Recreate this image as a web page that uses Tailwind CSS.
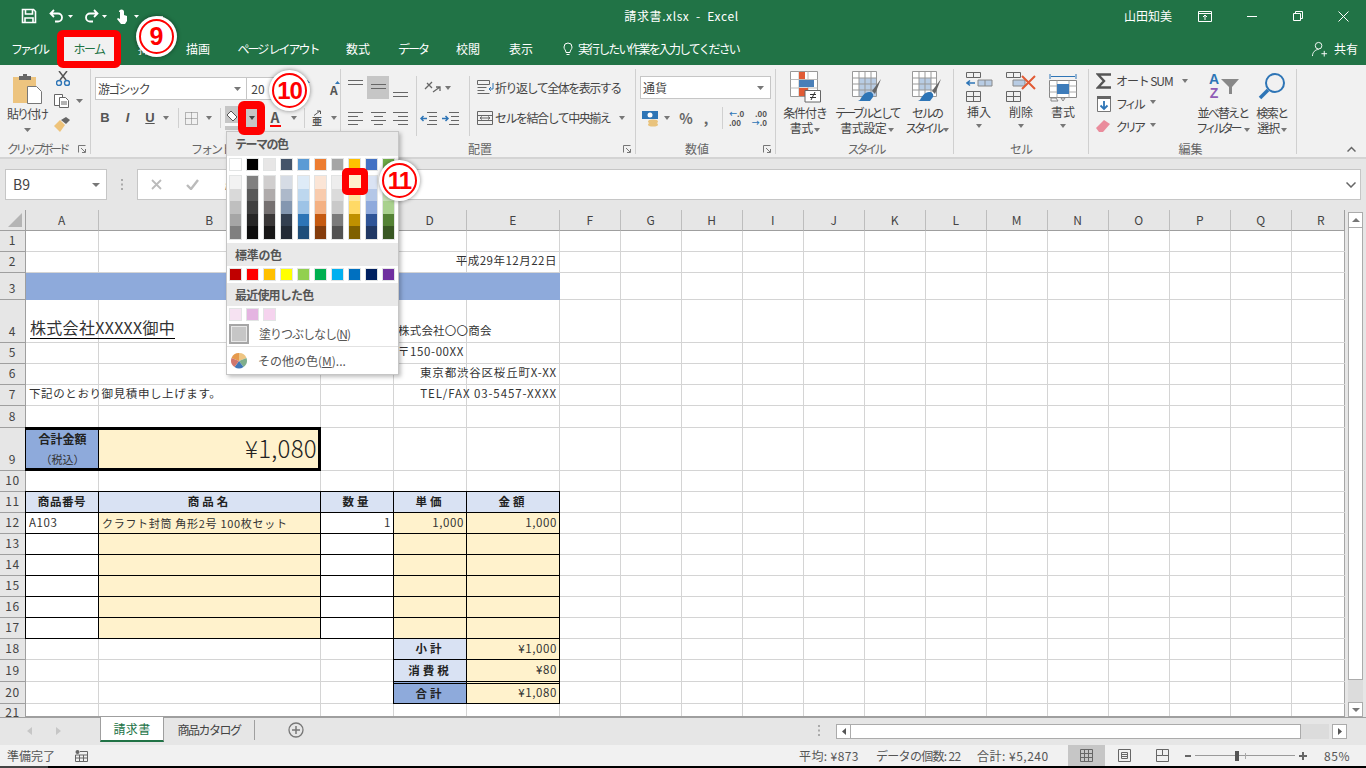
<!DOCTYPE html>
<html lang="ja"><head><meta charset="utf-8"><script src="https://cdn.jsdelivr.net/npm/@tailwindcss/browser@4"></script><title>請求書.xlsx - Excel</title></head>
<body class="m-0">
<div class="relative w-[1366px] h-[768px] overflow-hidden flex flex-col bg-[#e6e6e6] text-[#444] text-[12px] [font-family:'Noto_Sans_CJK_JP','Noto_Sans',sans-serif]">

<!-- title bar -->
<div class="h-[32px] shrink-0 bg-[#217346] text-white flex items-center">
  <div class="w-[21px]"></div>
  <svg class="w-[16px] h-[16px]" viewBox="0 0 16 16" fill="none" stroke="#fff" stroke-width="1.6"><path d="M1.5 1.5h11l2 2v11h-13z"/><path d="M4.5 2v4h7V2M4 15v-5h8v5" /></svg>
  <div class="w-[12px]"></div>
  <svg class="w-[16px] h-[14px]" viewBox="0 0 16 14" fill="none" stroke="#fff" stroke-width="1.8"><path d="M5 1 1.5 4.5 5 8M2 4.5h7a4 4 0 0 1 0 8H6"/></svg>
  <div class="w-[8px] flex justify-end"><svg width="5" height="3"><path d="M0 0h5L2.500 3z" fill="#fff"/></svg></div>
  <div class="w-[10px]"></div>
  <svg class="w-[16px] h-[14px]" viewBox="0 0 16 14" fill="none" stroke="#fff" stroke-width="1.800"><path d="M11 1l3.500 3.500L11 8M14 4.500H7a4 4 0 0 0 0 8h3"/></svg>
  <div class="w-[8px] flex justify-end"><svg width="5" height="3"><path d="M0 0h5L2.500 3z" fill="#fff"/></svg></div>
  <div class="w-[8px]"></div>
  <svg class="w-[13px] h-[17px]" viewBox="0 0 13 17" fill="#fff"><path d="M4 4a2.500 2.500 0 0 1 5 0v3l3 1v5l-2 3H6L2 11l1-1 2 1V4z"/></svg>
  <div class="w-[11px] flex justify-end"><svg width="5" height="3"><path d="M0 0h5L2.500 3z" fill="#fff"/></svg></div>
  <div class="w-[18px]"></div>
  <div class="w-[6px] h-[1px] bg-white"></div>
  <div class="flex-1 text-center text-[12px] pl-[76px]"><span class="tracking-[0.6px]">請求書.xlsx&nbsp; -&nbsp; Excel</span></div>
  <div class="w-[48px] text-[12px] tracking-[0px] mr-[26px] whitespace-nowrap">山田知美</div>
  <svg class="w-[14px] h-[11px]" viewBox="0 0 14 11" fill="none" stroke="#fff"><path d="M.5 .5h13v10H.5zM.5 2.500h13M7 9V4M5 6l2-2 2 2"/></svg>
  <div class="w-[35px]"></div>
  <div class="w-[10px] h-px bg-white"></div>
  <div class="w-[36px]"></div>
  <svg class="w-[10px] h-[10px]" viewBox="0 0 10 10" fill="none" stroke="#fff"><path d="M.5 2.500h7v7h-7zM2.500 2.500v-2h7v7h-2"/></svg>
  <div class="w-[35px]"></div>
  <svg class="w-[11px] h-[11px]" viewBox="0 0 11 11" fill="none" stroke="#fff"><path d="M.5 .5l10 10M10.500 .5l-10 10"/></svg>
  <div class="w-[17px]"></div>
</div>

<!-- tabs -->
<div class="h-[33px] shrink-0 bg-[#217346] text-white flex items-center text-[12px]">
  <div class="w-[58px] text-center tracking-[-3px]">ファイル</div>
  <div class="w-[62px] text-center"></div>
  <div class="w-[60px] text-center">挿入</div>
  <div class="w-[36px] text-center">描画</div>
  <div class="w-[124px] text-center tracking-[-2px] whitespace-nowrap">ページ&nbsp; レイアウト</div>
  <div class="w-[36px] text-center">数式</div>
  <div class="w-[74px] text-center tracking-[-2px]">データ</div>
  <div class="w-[36px] text-center">校閲</div>
  <div class="w-[70px] text-center">表示</div>
  <svg class="w-[10px] h-[14px] ml-[7px] mr-[5px]" viewBox="0 0 10 14" fill="none" stroke="#fff"><path d="M3 10.500C3 8 1 7.500 1 5a4 4 0 0 1 8 0c0 2.500-2 3-2 5.500zM3.500 12.500h3"/></svg>
  <div class="w-[170px] whitespace-nowrap tracking-[-1.9px]">実行したい作業を入力してください</div>
  <div class="flex-1"></div>
  <svg class="w-[16px] h-[16px] mr-[6px]" viewBox="0 0 17 16" fill="none" stroke="#fff"><circle cx="7" cy="4.500" r="3.500"/><path d="M.5 15.500c0-4 3-7 6.500-7M10 13h6M13 10v6"/></svg>
  <div class="mr-[8px] tracking-[0px] whitespace-nowrap">共有</div>
</div>

<!-- ribbon -->
<div class="h-[94px] shrink-0 bg-[#f1f1f1] border-b-2 border-[#d4d4d4] flex text-[#444] text-[12px] tracking-[-1.1px]">

  <!-- clipboard -->
  <div class="w-[90px] h-[92px] flex flex-col shrink-0">
    <div class="h-[75px] flex">
      <div class="w-[54px] flex flex-col items-center pt-[9px]">
        <svg class="w-[30px] h-[30px]" viewBox="0 0 30 30"><path d="M1 3h23v26H1z" fill="#edc47f"/><path d="M7 4V2h4V0h4v2h4v4H7z" fill="#666"/><path d="M15.500 12.500h9l5 5v12h-14z" fill="#fff" stroke="#777"/></svg>
        <div class="mt-[2px] leading-[16px] whitespace-nowrap tracking-[-2px]">貼り付け</div>
        <svg class="mt-[6px]" width="7" height="4"><path d="M0 0h7L3.500 4z" fill="#777"/></svg>
      </div>
      <div class="w-[36px] flex flex-col pt-[6px]">
        <svg class="w-[14px] h-[15px] ml-[2px]" viewBox="0 0 14 15" fill="none"><path d="M3 0l7 9M11 0 4 9" stroke="#555" stroke-width="1.500"/><circle cx="3" cy="12" r="2.500" stroke="#2e75b6" stroke-width="1.400"/><circle cx="11" cy="12" r="2.500" stroke="#2e75b6" stroke-width="1.400"/></svg>
        <div class="flex items-center mt-[8px] ml-[0px]">
          <svg class="w-[16px] h-[14px]" viewBox="0 0 16 14" fill="#fff" stroke="#666"><path d="M.5 .5h8v11h-8z"/><path d="M5.500 3.500h6l3 3v7h-9z"/><path d="M7 8h6M7 10h6"/></svg>
          <svg class="ml-[6px]" width="7" height="4"><path d="M0 0h7L3.500 4z" fill="#777"/></svg>
        </div>
        <svg class="w-[16px] h-[15px] mt-[9px]" viewBox="0 0 16 15"><path d="M0 9l6-6 5 5-5 7z" fill="#eec37a"/><path d="M7 3l5-3 4 3-4 4z" fill="#666"/></svg>
      </div>
    </div>
    <div class="h-[17px] flex items-center pl-[7px] text-[#666] justify-between pr-[4px] whitespace-nowrap"><span class="tracking-[-3.4px]">クリップボード</span><svg width="8" height="8" fill="none" stroke="#777"><path d="M.5 .5h7M.5 .5v7M3 3l4 4M7.500 4v3.500H4"/></svg></div>
  </div>
  <div class="w-px h-[85px] mt-[4px] bg-[#d0d0d0] shrink-0"></div>

  <!-- font -->
  <div class="w-[249px] h-[92px] shrink-0 flex flex-col">
    <div class="h-[75px] flex flex-col pt-[12px]">
      <div class="flex h-[23px] pl-[4px]">
        <div class="w-[156px] h-[23px] bg-white border border-[#c6c6c6] flex items-center justify-between px-[2px] pr-[5px]"><span class="tracking-[-1.8px]">游ゴシック</span><svg width="7" height="4"><path d="M0 0h7L3.500 4z" fill="#777"/></svg></div>
        <div class="w-[54px] h-[23px] bg-white border border-[#c6c6c6] border-l-0 flex items-center pl-[4px] tracking-[0px]">20</div>
        <div class="w-[8px] relative"><svg class="absolute right-[-2px] top-[3px]" width="5" height="3"><path d="M0 3h5L2.500 0z" fill="#2e75b6"/></svg></div>
        <div class="w-[19px]"></div>
        <div class="relative w-[14px] text-center text-[12px] font-bold text-[#555] leading-[26px]">A<svg class="absolute right-0 top-[4px]" width="5" height="3"><path d="M0 3h5L2.500 0z" fill="#2e75b6"/></svg></div>
      </div>
      <div class="flex h-[24px] mt-[6px] items-center">
        <div class="w-[3px]"></div>
        <div class="w-[22px] text-center font-bold text-[13px] text-[#555] tracking-normal [font-family:'Liberation_Sans']">B</div>
        <div class="w-[23px] text-center font-bold italic text-[13px] text-[#555] tracking-normal [font-family:'Liberation_Sans']">I</div>
        <div class="w-[22px] text-center font-bold underline text-[13px] text-[#555] tracking-normal [font-family:'Liberation_Sans']">U</div>
        <div class="w-[10px] flex justify-center"><svg width="6" height="4"><path d="M0 0h6L3 4z" fill="#777"/></svg></div>
        <div class="w-[7px]"></div><div class="w-px h-[20px] bg-[#d0d0d0]"></div>
        <div class="w-[24px] flex justify-center"><svg width="13" height="13" fill="none" stroke="#777" stroke-dasharray="1 1"><path d="M.5 .5h12v12H.5zM6.500 .5v12M.5 6.500h12"/></svg></div>
        <div class="w-[12px] flex justify-center"><svg width="6" height="4"><path d="M0 0h6L3 4z" fill="#777"/></svg></div>
        <div class="w-[5px]"></div><div class="w-px h-[20px] bg-[#d0d0d0]"></div>
        <div class="w-[4px]"></div>
        <div class="w-[13px] h-[24px] bg-[#c6c6c6] flex flex-col items-center justify-center"><svg width="12" height="13" viewBox="0 0 12 13" fill="#fff" stroke="#555"><path d="M5 1l6 6-4 4-6-6z"/></svg><div class="w-[13px] h-[3px] bg-[#f8f8f8]"></div></div>
        <div class="w-[30px]"></div>
        <div class="w-[14px] flex flex-col items-center font-bold text-[14px] text-[#555] leading-[15px] tracking-normal">A<div class="w-[11px] h-[2px] bg-[#f00]"></div></div>
        <div class="w-[18px] flex justify-end pr-[3px]"><svg width="6" height="4"><path d="M0 0h6L3 4z" fill="#777"/></svg></div>
        <div class="w-[4px]"></div><div class="w-px h-[20px] bg-[#d0d0d0]"></div>
        <div class="w-[24px] flex flex-col items-center text-[10px] leading-[10px] font-bold text-[#555] tracking-normal"><svg width="9" height="6" fill="none" stroke="#555"><path d="M1 5.500 7 1M4 1h3.500v3"/></svg>亜</div>
        <div class="w-[10px] flex justify-center"><svg width="6" height="4"><path d="M0 0h6L3 4z" fill="#777"/></svg></div>
      </div>
    </div>
    <div class="h-[17px] flex items-center pl-[100px] text-[#666] whitespace-nowrap tracking-[-2px]">フォント</div>
  </div>
  <div class="w-px h-[85px] mt-[4px] bg-[#d0d0d0] shrink-0"></div>

  <!-- alignment -->
  <div class="w-[294px] h-[92px] shrink-0 flex flex-col">
    <div class="h-[75px] flex">
      <div class="flex flex-col pt-[11px] pl-[3px] w-[75px]">
        <div class="flex h-[23px] items-center">
          <div class="w-[23px] flex justify-center self-start pt-[4px]"><svg width="15" height="8" stroke="#666"><path d="M0 .5h15M0 4.500h15"/></svg></div>
          <div class="w-[22px] h-[23px] bg-[#c6c6c6] flex justify-center items-center"><svg width="15" height="8" stroke="#666"><path d="M0 .5h15M0 4.500h15"/></svg></div>
          <div class="w-[22px] flex justify-center self-end pb-[1px]"><svg width="15" height="8" stroke="#666"><path d="M0 2.500h15M0 6.500h15"/></svg></div>
        </div>
        <div class="flex h-[24px] mt-[7px] items-center">
          <div class="w-[23px] flex justify-center"><svg width="15" height="13" stroke="#666"><path d="M0 .5h15M0 4.500h10M0 8.500h15M0 12.500h10"/></svg></div>
          <div class="w-[22px] flex justify-center"><svg width="15" height="13" stroke="#666"><path d="M0 .5h15M3 4.500h9M0 8.500h15M3 12.500h9"/></svg></div>
          <div class="w-[22px] flex justify-center"><svg width="15" height="13" stroke="#666"><path d="M0 .5h15M5 4.500h10M0 8.500h15M5 12.500h10"/></svg></div>
        </div>
      </div>
      <div class="w-px h-[60px] mt-[11px] bg-[#d0d0d0]"></div>
      <div class="flex flex-col pt-[11px] w-[52px]">
        <div class="flex h-[23px] items-center pl-[7px]"><svg width="17" height="15" viewBox="0 0 17 15" fill="none" stroke="#666" stroke-width="1.300"><path d="M1 9l7-7M3 3l5 5M9 12l7-5M12 7h4v4" /></svg><svg class="ml-[4px]" width="6" height="4"><path d="M0 0h6L3 4z" fill="#777"/></svg></div>
        <div class="flex h-[24px] mt-[7px] items-center pl-[3px] gap-[5px]">
          <svg width="17" height="13" fill="none" stroke="#666"><path d="M7 .5h10M9 4.500h8M9 8.500h8M7 12.500h10"/><path d="M7 6.500H1M3.500 4l-2.500 2.500L3.500 9" stroke="#2e75b6" stroke-width="1.500"/></svg>
          <svg width="17" height="13" fill="none" stroke="#666"><path d="M7 .5h10M9 4.500h8M9 8.500h8M7 12.500h10"/><path d="M0 6.500h6M3.500 4l2.500 2.500L3.500 9" stroke="#2e75b6" stroke-width="1.500"/></svg>
        </div>
      </div>
      <div class="w-px h-[60px] mt-[11px] bg-[#d0d0d0]"></div>
      <div class="flex flex-col pt-[11px] pl-[7px]">
        <div class="flex h-[23px] items-center whitespace-nowrap"><svg class="mr-[1px]" width="17" height="15" fill="none" stroke="#666"><path d="M.5 .5h12v4H.5zM.5 7.500h9M.5 10.500h7M.5 13.500h12"/><path d="M16 3v6h-4l2-2M12 9l2 2" stroke="#2e75b6"/></svg><span class="tracking-[-1.5px]">折り返して全体を表示する</span></div>
        <div class="flex h-[24px] mt-[7px] items-center whitespace-nowrap"><svg class="mr-[2px]" width="16" height="14" fill="none" stroke="#666"><path d="M.5 .5h15v13H.5zM.5 4.500h15M.5 9.500h15M3 7h10M5 5.500 3 7l2 1.500M11 5.500 13 7l-2 1.500"/></svg><span class="tracking-[-1.5px]">セルを結合して中央揃え</span><svg class="ml-[9px]" width="6" height="4"><path d="M0 0h6L3 4z" fill="#777"/></svg></div>
      </div>
    </div>
    <div class="h-[17px] flex items-center justify-between text-[#666] pl-[127px] pr-[4px]"><span class="tracking-normal">配置</span><svg width="8" height="8" fill="none" stroke="#777"><path d="M.5 .5h7M.5 .5v7M3 3l4 4M7.500 4v3.500H4"/></svg></div>
  </div>
  <div class="w-px h-[85px] mt-[4px] bg-[#d0d0d0] shrink-0"></div>

  <!-- number -->
  <div class="w-[139px] h-[92px] shrink-0 flex flex-col">
    <div class="h-[75px] flex flex-col pt-[11px] pl-[4px]">
      <div class="w-[131px] h-[23px] bg-white border border-[#c6c6c6] flex items-center justify-between px-[2px] pr-[6px]"><span class="tracking-normal">通貨</span><svg width="7" height="4"><path d="M0 0h7L3.500 4z" fill="#777"/></svg></div>
      <div class="flex items-center h-[24px] mt-[7px] tracking-normal">
        <svg class="ml-[2px]" width="17" height="17" viewBox="0 0 17 17"><path d="M0 1h16v8H0z" fill="#2e75b6"/><circle cx="8" cy="5" r="2.500" fill="#fff"/><ellipse cx="11" cy="11.500" rx="5" ry="2" fill="#e9c37d"/><ellipse cx="11" cy="14.500" rx="5" ry="2" fill="#e9c37d"/></svg>
        <svg class="ml-[5px]" width="6" height="4"><path d="M0 0h6L3 4z" fill="#777"/></svg>
        <span class="w-[26px] ml-[3px] text-center text-[14px] font-bold text-[#666]">%</span>
        <span class="w-[14px] text-center text-[14px] font-bold text-[#666]">,</span>
        <div class="w-px h-[22px] ml-[9px] bg-[#d0d0d0]"></div>
        <div class="w-[24px] pl-[6px] text-[8px] leading-[9px] font-semibold text-[#555] whitespace-nowrap"><span class="text-[#2e75b6]">←</span>.0<br>.00</div>
        <div class="w-[20px] text-[8px] leading-[9px] text-right font-semibold text-[#555] whitespace-nowrap">.00<br><span class="text-[#2e75b6]">→</span>.0</div>
      </div>
    </div>
    <div class="h-[17px] flex items-center justify-between text-[#666] pl-[49px] pr-[4px]"><span class="tracking-normal">数値</span><svg width="8" height="8" fill="none" stroke="#777"><path d="M.5 .5h7M.5 .5v7M3 3l4 4M7.500 4v3.500H4"/></svg></div>
  </div>
  <div class="w-px h-[85px] mt-[4px] bg-[#d0d0d0] shrink-0"></div>

  <!-- styles -->
  <div class="w-[177px] h-[92px] shrink-0 flex flex-col">
    <div class="h-[75px] flex pl-[1px]">
      <div class="w-[56px] flex flex-col items-center pt-[6px]">
        <svg width="31" height="32" viewBox="0 0 31 32" fill="none"><path d="M.5 .5h27v25H.5z" fill="#fff" stroke="#999"/><path d="M9 .5v25M18 .5v25M.5 8.500h27M.5 17h27" stroke="#bbb"/><path d="M9 1h6v7H9z" fill="#e15b35"/><path d="M9 9h15v7H9z" fill="#4a7fb8"/><path d="M9 17h9v8H9z" fill="#e15b35"/><path d="M15 19.500h15.500V31H15z" fill="#fff" stroke="#666"/><path d="M20 23.500h6M20 26.500h6M25 21l-4 8" stroke="#333"/></svg>
        <div class="leading-[15px] mt-[2px] text-center whitespace-nowrap">条件付き<br><span class="tracking-[-0.5px]">書式</span> <svg class="inline" width="6" height="4"><path d="M0 0h6L3 4z" fill="#777"/></svg></div>
      </div>
      <div class="w-[68px] flex flex-col items-center pt-[6px]">
        <svg width="31" height="32" viewBox="0 0 31 32" fill="none"><path d="M.5 .5h24v25H.5z" fill="#fff" stroke="#999"/><path d="M7 7h17v18H7z" fill="#b8cce4"/><path d="M7 .5v25M13 .5v25M19 .5v25M.5 7h24M.5 13h24M.5 19h24" stroke="#999"/><path d="M29 8 20 20l3 3z" fill="#666"/><path d="M8 29c2-4 5-8 9-8 3 0 5 2 4 5l-3 4H6z" fill="#2e75b6"/></svg>
        <div class="leading-[15px] mt-[2px] text-center whitespace-nowrap"><span class="tracking-[-2.7px]">テーブルとして</span><br><span class="tracking-[-0.5px]">書式設定</span> <svg class="inline" width="6" height="4"><path d="M0 0h6L3 4z" fill="#777"/></svg></div>
      </div>
      <div class="w-[48px] ml-[2px] flex flex-col items-center pt-[6px]">
        <svg width="31" height="32" viewBox="0 0 31 32" fill="none"><path d="M.5 .5h24v25H.5z" fill="#fff" stroke="#999"/><path d="M7 7h12v12H7z" fill="#b8cce4"/><path d="M7 .5v25M13 .5v25M19 .5v25M.5 7h24M.5 13h24M.5 19h24" stroke="#999"/><path d="M29 8 20 20l3 3z" fill="#666"/><path d="M8 29c2-4 5-8 9-8 3 0 5 2 4 5l-3 4H6z" fill="#2e75b6"/></svg>
        <div class="leading-[15px] mt-[2px] text-center whitespace-nowrap"><span class="tracking-[-2px]">セルの</span><br><span class="tracking-[-3px]">スタイル</span> <svg class="inline" width="6" height="4"><path d="M0 0h6L3 4z" fill="#777"/></svg></div>
      </div>
    </div>
    <div class="h-[17px] flex items-center justify-center text-[#666] pl-[2px] tracking-[-3px]">スタイル</div>
  </div>
  <div class="w-px h-[85px] mt-[4px] bg-[#d0d0d0] shrink-0"></div>

  <!-- cells -->
  <div class="w-[134px] h-[92px] shrink-0 flex flex-col">
    <div class="h-[75px] flex pl-[4px]">
      <div class="w-[42px] flex flex-col items-center pt-[7px]">
        <svg width="27" height="30" viewBox="0 0 27 30" fill="none"><path d="M.5 .5h14v5H.5zM7.500 .5v5M.5 19.500h14v10H.5zM7.500 19.500v10M.5 24.500h14" stroke="#666"/><path d="M12 8h14v6H12zM19 8v6" fill="#b8cce4" stroke="#888"/><path d="M1 11h8M4 8.500 1 11l3 2.500" stroke="#2e75b6" stroke-width="1.500"/></svg>
        <div class="leading-[15px] mt-[2px] tracking-normal">挿入</div>
        <svg class="mt-[5px]" width="6" height="4"><path d="M0 0h6L3 4z" fill="#777"/></svg>
      </div>
      <div class="w-[42px] flex flex-col items-center pt-[7px]">
        <svg width="30" height="30" viewBox="0 0 30 30" fill="none"><path d="M.5 .5h14v5H.5zM7.500 .5v5M.5 19.500h14v10H.5zM7.500 19.500v10M.5 24.500h14" stroke="#666"/><path d="M7 8h12v6H7z" fill="#b8cce4" stroke="#888"/><path d="M16 4l13 13M29 4 16 17" stroke="#e15b35" stroke-width="2"/></svg>
        <div class="leading-[15px] mt-[2px] tracking-normal">削除</div>
        <svg class="mt-[5px]" width="6" height="4"><path d="M0 0h6L3 4z" fill="#777"/></svg>
      </div>
      <div class="w-[42px] flex flex-col items-center pt-[7px]">
        <svg width="28" height="30" viewBox="0 0 28 30" fill="none"><path d="M1 2v5M27 2v5M2 4.500h24" stroke="#2e75b6"/><path d="M.5 8.500h27v17H.5z" fill="#fff" stroke="#888"/><path d="M8 8.500v17M20 8.500v17M.5 14h27M.5 20h27" stroke="#aaa"/><path d="M8 12h12v10H8z" fill="#3e7cba"/><path d="M2 26h5l2 3H2zM12 26h4l-2 3z" stroke="#888"/></svg>
        <div class="leading-[15px] mt-[2px] tracking-normal">書式</div>
        <svg class="mt-[5px]" width="6" height="4"><path d="M0 0h6L3 4z" fill="#777"/></svg>
      </div>
    </div>
    <div class="h-[17px] flex items-center justify-center text-[#666]">セル</div>
  </div>
  <div class="w-px h-[85px] mt-[4px] bg-[#d0d0d0] shrink-0"></div>

  <!-- editing -->
  <div class="w-[207px] h-[92px] shrink-0 flex flex-col">
    <div class="h-[75px] flex">
      <div class="w-[103px] flex flex-col pl-[7px] pt-[4px]">
        <div class="flex items-center h-[23px] whitespace-nowrap"><svg width="16" height="16" fill="none" stroke="#555" stroke-width="2.400"><path d="M15 1.500H2l6 6.500-6 6.500h13"/></svg><span class="ml-[4px] tracking-[-1.1px]">オート SUM</span><svg class="ml-[9px]" width="6" height="4"><path d="M0 0h6L3 4z" fill="#777"/></svg></div>
        <div class="flex items-center h-[23px] pl-[1px]"><svg width="14" height="16" fill="none"><path d="M.5 .5h13v15H.5z" fill="#fff" stroke="#777"/><path d="M0 0h14v3H0z" fill="#666"/><path d="M7 5v8M3.500 9.500 7 13l3.500-3.500" stroke="#2e75b6" stroke-width="1.800"/></svg><span class="ml-[5px] tracking-[-3px]">フィル</span><svg class="ml-[7px] mb-[4px]" width="6" height="4"><path d="M0 0h6L3 4z" fill="#777"/></svg></div>
        <div class="flex items-center h-[23px]"><svg width="15" height="13" viewBox="0 0 15 13"><path d="M0 8l8-8 6 4-7 8H3z" fill="#ea8c9c"/></svg><span class="ml-[5px] tracking-[-3px]">クリア</span><svg class="ml-[7px] mb-[4px]" width="6" height="4"><path d="M0 0h6L3 4z" fill="#777"/></svg></div>
      </div>
      <div class="w-[62px] flex flex-col items-center pt-[7px]">
        <div class="h-[30px] flex w-[32px]"><div class="flex flex-col items-center w-[14px] text-[14px] font-bold leading-[14px] tracking-normal [font-family:'Liberation_Sans']"><span class="text-[#2e75b6]">A</span><span class="text-[#8f5bb5]">Z</span></div><svg class="mt-[7px]" width="18" height="15" fill="#888"><path d="M0 0h18l-7 8v7H8V8z"/></svg></div>
        <div class="leading-[15px] mt-[3px] text-center whitespace-nowrap"><span class="tracking-[-1.8px]">並べ替えと</span><br><span class="tracking-[-3.4px]">フィルター</span> <svg class="inline ml-[3px]" width="6" height="4"><path d="M0 0h6L3 4z" fill="#777"/></svg></div>
      </div>
      <div class="w-[36px] flex flex-col items-center pt-[7px]">
        <svg width="28" height="28" fill="none" stroke="#2e75b6"><circle cx="17" cy="11" r="9" stroke-width="2"/><path d="M10 18 2 26" stroke-width="3.500"/></svg>
        <div class="leading-[15px] mt-[5px] text-center whitespace-nowrap"><span class="tracking-[-1.5px]">検索と</span><br>選択 <svg class="inline" width="6" height="4"><path d="M0 0h6L3 4z" fill="#777"/></svg></div>
      </div>
    </div>
    <div class="h-[17px] flex items-center justify-center text-[#666] pr-[4px] tracking-normal">編集</div>
  </div>
  <div class="w-px h-[85px] mt-[4px] bg-[#d0d0d0] shrink-0"></div>
  <div class="flex-1 flex justify-end items-end pb-[5px] pr-[10px]"><svg width="9" height="6" fill="none" stroke="#666" stroke-width="1.500"><path d="M.5 5.500 4.500 1.500l4 4"/></svg></div>
</div>

<!-- formula bar -->
<div class="h-[51px] shrink-0 flex items-start pt-[10px] bg-[#e6e6e6]">
  <div class="ml-[5px] w-[102px] h-[31px] bg-white border border-[#c6c6c6] flex items-center justify-between pl-[7px] pr-[6px] text-[14px]"><span>B9</span><svg width="8" height="4"><path d="M0 0h8L4 4z" fill="#777"/></svg></div>
  <div class="w-[30px] h-[31px] flex items-center justify-center"><svg width="2" height="11" fill="#aaa"><path d="M0 0h2v2H0zM0 4.500h2v2H0zM0 9h2v2H0z"/></svg></div>
  <div class="w-[1224px] h-[31px] bg-white border border-[#c6c6c6] flex items-center">
    <svg class="ml-[13px]" width="11" height="11" fill="none" stroke="#bbb" stroke-width="1.800"><path d="M1 1l9 9M10 1l-9 9"/></svg>
    <svg class="ml-[24px]" width="13" height="11" fill="none" stroke="#bbb" stroke-width="2.400"><path d="M1 6l4 4 7-9"/></svg>
    <span class="ml-[25px] italic text-[#666]">fx</span>
    <div class="flex-1"></div>
    <svg class="mr-[4px]" width="10" height="6" fill="none" stroke="#666" stroke-width="1.500"><path d="M.5 .5l4.500 4.500L9.500 .5"/></svg>
  </div>
</div>

<!-- sheet -->
<div class="h-[507px] shrink-0 flex overflow-hidden">
  <div class="w-[1345px] shrink-0 bg-white grid grid-cols-[26px_73px_222px_73px_73px_93px_repeat(12,61px)_53px] grid-rows-[21px_21px_21px_27px_43px_21px_21px_21px_22px_43px_21px_21px_21px_21px_21px_21px_21px_21px_21px_22px_22px_13px] text-[11.5px] tracking-[0.6px] text-[#333] relative">

    <!-- gridlines -->
    <div class="col-start-2 row-start-2 row-span-21 border-r border-[#d4d4d4]"></div>
    <div class="col-start-3 row-start-2 row-span-21 border-r border-[#d4d4d4]"></div>
    <div class="col-start-4 row-start-2 row-span-21 border-r border-[#d4d4d4]"></div>
    <div class="col-start-5 row-start-2 row-span-21 border-r border-[#d4d4d4]"></div>
    <div class="col-start-6 row-start-2 row-span-21 border-r border-[#d4d4d4]"></div>
    <div class="col-start-7 row-start-2 row-span-21 border-r border-[#d4d4d4]"></div>
    <div class="col-start-8 row-start-2 row-span-21 border-r border-[#d4d4d4]"></div>
    <div class="col-start-9 row-start-2 row-span-21 border-r border-[#d4d4d4]"></div>
    <div class="col-start-10 row-start-2 row-span-21 border-r border-[#d4d4d4]"></div>
    <div class="col-start-11 row-start-2 row-span-21 border-r border-[#d4d4d4]"></div>
    <div class="col-start-12 row-start-2 row-span-21 border-r border-[#d4d4d4]"></div>
    <div class="col-start-13 row-start-2 row-span-21 border-r border-[#d4d4d4]"></div>
    <div class="col-start-14 row-start-2 row-span-21 border-r border-[#d4d4d4]"></div>
    <div class="col-start-15 row-start-2 row-span-21 border-r border-[#d4d4d4]"></div>
    <div class="col-start-16 row-start-2 row-span-21 border-r border-[#d4d4d4]"></div>
    <div class="col-start-17 row-start-2 row-span-21 border-r border-[#d4d4d4]"></div>
    <div class="col-start-18 row-start-2 row-span-21 border-r border-[#d4d4d4]"></div>
    <div class="col-start-19 row-start-2 row-span-21 border-r border-[#a6a6a6]"></div>

    <div class="col-start-2 col-span-18 row-start-2 border-b border-[#d4d4d4]"></div>
    <div class="col-start-2 col-span-18 row-start-3 border-b border-[#d4d4d4]"></div>
    <div class="col-start-2 col-span-18 row-start-4 border-b border-[#d4d4d4]"></div>
    <div class="col-start-2 col-span-18 row-start-5 border-b border-[#d4d4d4]"></div>
    <div class="col-start-2 col-span-18 row-start-6 border-b border-[#d4d4d4]"></div>
    <div class="col-start-2 col-span-18 row-start-7 border-b border-[#d4d4d4]"></div>
    <div class="col-start-2 col-span-18 row-start-8 border-b border-[#d4d4d4]"></div>
    <div class="col-start-2 col-span-18 row-start-9 border-b border-[#d4d4d4]"></div>
    <div class="col-start-2 col-span-18 row-start-10 border-b border-[#d4d4d4]"></div>
    <div class="col-start-2 col-span-18 row-start-11 border-b border-[#d4d4d4]"></div>
    <div class="col-start-2 col-span-18 row-start-12 border-b border-[#d4d4d4]"></div>
    <div class="col-start-2 col-span-18 row-start-13 border-b border-[#d4d4d4]"></div>
    <div class="col-start-2 col-span-18 row-start-14 border-b border-[#d4d4d4]"></div>
    <div class="col-start-2 col-span-18 row-start-15 border-b border-[#d4d4d4]"></div>
    <div class="col-start-2 col-span-18 row-start-16 border-b border-[#d4d4d4]"></div>
    <div class="col-start-2 col-span-18 row-start-17 border-b border-[#d4d4d4]"></div>
    <div class="col-start-2 col-span-18 row-start-18 border-b border-[#d4d4d4]"></div>
    <div class="col-start-2 col-span-18 row-start-19 border-b border-[#d4d4d4]"></div>
    <div class="col-start-2 col-span-18 row-start-20 border-b border-[#d4d4d4]"></div>
    <div class="col-start-2 col-span-18 row-start-21 border-b border-[#d4d4d4]"></div>
    <div class="col-start-2 col-span-18 row-start-22 border-b border-[#9f9f9f]"></div>

    <!-- corner + column headers -->
    <div class="col-start-1 row-start-1 bg-[#e6e6e6] border-r border-b border-[#9f9f9f] flex items-end justify-end pr-[3px] pb-[3px]"><svg width="14" height="14"><path d="M14 0v14H0z" fill="#b4b4b4"/></svg></div>
    <div class="col-start-2 row-start-1 bg-[#e6e6e6] border-r border-b border-r-[#bdbdbd] border-b-[#9f9f9f] flex items-center justify-center text-[12px] text-[#444]">A</div>
    <div class="col-start-3 row-start-1 bg-[#e6e6e6] border-r border-b border-r-[#bdbdbd] border-b-[#9f9f9f] flex items-center justify-center text-[12px] text-[#444]">B</div>
    <div class="col-start-4 row-start-1 bg-[#e6e6e6] border-r border-b border-r-[#bdbdbd] border-b-[#9f9f9f] flex items-center justify-center text-[12px] text-[#444]">C</div>
    <div class="col-start-5 row-start-1 bg-[#e6e6e6] border-r border-b border-r-[#bdbdbd] border-b-[#9f9f9f] flex items-center justify-center text-[12px] text-[#444]">D</div>
    <div class="col-start-6 row-start-1 bg-[#e6e6e6] border-r border-b border-r-[#bdbdbd] border-b-[#9f9f9f] flex items-center justify-center text-[12px] text-[#444]">E</div>
    <div class="col-start-7 row-start-1 bg-[#e6e6e6] border-r border-b border-r-[#bdbdbd] border-b-[#9f9f9f] flex items-center justify-center text-[12px] text-[#444]">F</div>
    <div class="col-start-8 row-start-1 bg-[#e6e6e6] border-r border-b border-r-[#bdbdbd] border-b-[#9f9f9f] flex items-center justify-center text-[12px] text-[#444]">G</div>
    <div class="col-start-9 row-start-1 bg-[#e6e6e6] border-r border-b border-r-[#bdbdbd] border-b-[#9f9f9f] flex items-center justify-center text-[12px] text-[#444]">H</div>
    <div class="col-start-10 row-start-1 bg-[#e6e6e6] border-r border-b border-r-[#bdbdbd] border-b-[#9f9f9f] flex items-center justify-center text-[12px] text-[#444]">I</div>
    <div class="col-start-11 row-start-1 bg-[#e6e6e6] border-r border-b border-r-[#bdbdbd] border-b-[#9f9f9f] flex items-center justify-center text-[12px] text-[#444]">J</div>
    <div class="col-start-12 row-start-1 bg-[#e6e6e6] border-r border-b border-r-[#bdbdbd] border-b-[#9f9f9f] flex items-center justify-center text-[12px] text-[#444]">K</div>
    <div class="col-start-13 row-start-1 bg-[#e6e6e6] border-r border-b border-r-[#bdbdbd] border-b-[#9f9f9f] flex items-center justify-center text-[12px] text-[#444]">L</div>
    <div class="col-start-14 row-start-1 bg-[#e6e6e6] border-r border-b border-r-[#bdbdbd] border-b-[#9f9f9f] flex items-center justify-center text-[12px] text-[#444]">M</div>
    <div class="col-start-15 row-start-1 bg-[#e6e6e6] border-r border-b border-r-[#bdbdbd] border-b-[#9f9f9f] flex items-center justify-center text-[12px] text-[#444]">N</div>
    <div class="col-start-16 row-start-1 bg-[#e6e6e6] border-r border-b border-r-[#bdbdbd] border-b-[#9f9f9f] flex items-center justify-center text-[12px] text-[#444]">O</div>
    <div class="col-start-17 row-start-1 bg-[#e6e6e6] border-r border-b border-r-[#bdbdbd] border-b-[#9f9f9f] flex items-center justify-center text-[12px] text-[#444]">P</div>
    <div class="col-start-18 row-start-1 bg-[#e6e6e6] border-r border-b border-r-[#bdbdbd] border-b-[#9f9f9f] flex items-center justify-center text-[12px] text-[#444]">Q</div>
    <div class="col-start-19 row-start-1 bg-[#e6e6e6] border-b border-r border-[#9f9f9f] flex items-center justify-center text-[12px] text-[#444] pl-[6px]">R</div>

    <!-- row headers -->
    <div class="col-start-1 row-start-2 bg-[#e6e6e6] border-r border-b border-[#9f9f9f] flex items-end justify-center pb-[3px] leading-[16px] text-[12px] text-[#444]">1</div>
    <div class="col-start-1 row-start-3 bg-[#e6e6e6] border-r border-b border-[#9f9f9f] flex items-end justify-center pb-[3px] leading-[16px] text-[12px] text-[#444]">2</div>
    <div class="col-start-1 row-start-4 bg-[#e6e6e6] border-r border-b border-[#9f9f9f] flex items-end justify-center pb-[3px] leading-[16px] text-[12px] text-[#444]">3</div>
    <div class="col-start-1 row-start-5 bg-[#e6e6e6] border-r border-b border-[#9f9f9f] flex items-end justify-center pb-[3px] leading-[16px] text-[12px] text-[#444]">4</div>
    <div class="col-start-1 row-start-6 bg-[#e6e6e6] border-r border-b border-[#9f9f9f] flex items-end justify-center pb-[3px] leading-[16px] text-[12px] text-[#444]">5</div>
    <div class="col-start-1 row-start-7 bg-[#e6e6e6] border-r border-b border-[#9f9f9f] flex items-end justify-center pb-[3px] leading-[16px] text-[12px] text-[#444]">6</div>
    <div class="col-start-1 row-start-8 bg-[#e6e6e6] border-r border-b border-[#9f9f9f] flex items-end justify-center pb-[3px] leading-[16px] text-[12px] text-[#444]">7</div>
    <div class="col-start-1 row-start-9 bg-[#e6e6e6] border-r border-b border-[#9f9f9f] flex items-end justify-center pb-[3px] leading-[16px] text-[12px] text-[#444]">8</div>
    <div class="col-start-1 row-start-10 bg-[#e6e6e6] border-r border-b border-[#9f9f9f] flex items-end justify-center pb-[3px] leading-[16px] text-[12px] text-[#444]">9</div>
    <div class="col-start-1 row-start-11 bg-[#e6e6e6] border-r border-b border-[#9f9f9f] flex items-end justify-center pb-[3px] leading-[16px] text-[12px] text-[#444]">10</div>
    <div class="col-start-1 row-start-12 bg-[#e6e6e6] border-r border-b border-[#9f9f9f] flex items-end justify-center pb-[3px] leading-[16px] text-[12px] text-[#444]">11</div>
    <div class="col-start-1 row-start-13 bg-[#e6e6e6] border-r border-b border-[#9f9f9f] flex items-end justify-center pb-[3px] leading-[16px] text-[12px] text-[#444]">12</div>
    <div class="col-start-1 row-start-14 bg-[#e6e6e6] border-r border-b border-[#9f9f9f] flex items-end justify-center pb-[3px] leading-[16px] text-[12px] text-[#444]">13</div>
    <div class="col-start-1 row-start-15 bg-[#e6e6e6] border-r border-b border-[#9f9f9f] flex items-end justify-center pb-[3px] leading-[16px] text-[12px] text-[#444]">14</div>
    <div class="col-start-1 row-start-16 bg-[#e6e6e6] border-r border-b border-[#9f9f9f] flex items-end justify-center pb-[3px] leading-[16px] text-[12px] text-[#444]">15</div>
    <div class="col-start-1 row-start-17 bg-[#e6e6e6] border-r border-b border-[#9f9f9f] flex items-end justify-center pb-[3px] leading-[16px] text-[12px] text-[#444]">16</div>
    <div class="col-start-1 row-start-18 bg-[#e6e6e6] border-r border-b border-[#9f9f9f] flex items-end justify-center pb-[3px] leading-[16px] text-[12px] text-[#444]">17</div>
    <div class="col-start-1 row-start-19 bg-[#e6e6e6] border-r border-b border-[#9f9f9f] flex items-end justify-center pb-[3px] leading-[16px] text-[12px] text-[#444]">18</div>
    <div class="col-start-1 row-start-20 bg-[#e6e6e6] border-r border-b border-[#9f9f9f] flex items-end justify-center pb-[3px] leading-[16px] text-[12px] text-[#444]">19</div>
    <div class="col-start-1 row-start-21 bg-[#e6e6e6] border-r border-b border-[#9f9f9f] flex items-end justify-center pb-[3px] leading-[16px] text-[12px] text-[#444]">20</div>
    <div class="col-start-1 row-start-22 bg-[#e6e6e6] border-r border-[#9f9f9f] flex justify-center leading-[16px] text-[12px] text-[#444] overflow-hidden">21</div>

    <!-- content -->
    <div class="col-start-5 col-span-2 row-start-3 flex items-end justify-end pr-[3px] pb-[4px] tracking-[0.5px] whitespace-nowrap">平成29年12月22日</div>
    <div class="col-start-2 col-span-5 row-start-4 bg-[#8eaadb]"></div>
    <div class="col-start-2 col-span-2 row-start-5 flex items-end pl-[4px] pb-[4px] text-[16px] leading-[22px] tracking-[0.3px] whitespace-nowrap"><span class="border-b border-black">株式会社XXXXX御中</span></div>
    <div class="col-start-5 col-span-2 row-start-5 flex items-end pl-[4px] pb-[4px] tracking-[0.2px] whitespace-nowrap">株式会社〇〇商会</div>
    <div class="col-start-5 col-span-2 row-start-6 flex items-end pl-[4px] pb-[4px] whitespace-nowrap">〒150-00XX</div>
    <div class="col-start-5 col-span-2 row-start-7 flex items-end justify-end pr-[3px] pb-[4px] tracking-[0.8px] whitespace-nowrap">東京都渋谷区桜丘町X-XX</div>
    <div class="col-start-2 col-span-3 row-start-8 flex items-end pl-[3px] pb-[4px] whitespace-nowrap">下記のとおり御見積申し上げます。</div>
    <div class="col-start-5 col-span-2 row-start-8 flex items-end justify-end pr-[3px] pb-[4px] tracking-[0.9px] whitespace-nowrap">TEL/FAX 03-5457-XXXX</div>

    <div class="col-start-2 row-start-10 -mt-px -ml-px border-y-[3px] border-l border-black bg-[#8eaadb] flex flex-col items-center justify-center leading-[20px] text-[11px] tracking-normal"><span class="font-semibold text-[12px] text-[#222]">合計金額</span><span>（税込）</span></div>
    <div class="col-start-3 row-start-10 -mt-px -ml-px border-y-[3px] border-r-[3px] border-l border-black bg-[#fff2cc] flex items-center justify-end pr-[1px] pb-[2px] text-[24px] font-light text-[#222] tracking-[0.3px]">¥1,080</div>

    <div class="col-start-2 row-start-12 -mt-px -ml-px border border-black bg-[#d9e2f3] flex items-center justify-center font-semibold text-[#222]">商品番号</div>
    <div class="col-start-3 row-start-12 -mt-px -ml-px border border-black bg-[#d9e2f3] flex items-center justify-center font-semibold text-[#222] tracking-[3px]">商品名</div>
    <div class="col-start-4 row-start-12 -mt-px -ml-px border border-black bg-[#d9e2f3] flex items-center justify-center font-semibold text-[#222] tracking-[3px]">数量</div>
    <div class="col-start-5 row-start-12 -mt-px -ml-px border border-black bg-[#d9e2f3] flex items-center justify-center font-semibold text-[#222] tracking-[3px]">単価</div>
    <div class="col-start-6 row-start-12 -mt-px -ml-px border border-black bg-[#d9e2f3] flex items-center justify-center font-semibold text-[#222] tracking-[3px]">金額</div>

    <div class="col-start-2 row-start-13 -mt-px -ml-px border border-black bg-white flex items-center pl-[3px]">A103</div>
    <div class="col-start-3 row-start-13 -mt-px -ml-px border border-black bg-[#fff2cc] flex items-center pl-[3px] whitespace-nowrap text-[11px] tracking-[0.7px]">クラフト封筒 角形2号 100枚セット</div>
    <div class="col-start-4 row-start-13 -mt-px -ml-px border border-black bg-white flex items-center justify-end pr-[2px]">1</div>
    <div class="col-start-5 row-start-13 -mt-px -ml-px border border-black bg-[#fff2cc] flex items-center justify-end pr-[2px]">1,000</div>
    <div class="col-start-6 row-start-13 -mt-px -ml-px border border-black bg-[#fff2cc] flex items-center justify-end pr-[2px]">1,000</div>

    <div class="col-start-2 row-start-14 -mt-px -ml-px border border-black bg-white"></div><div class="col-start-3 row-start-14 -mt-px -ml-px border border-black bg-[#fff2cc]"></div><div class="col-start-4 row-start-14 -mt-px -ml-px border border-black bg-white"></div><div class="col-start-5 row-start-14 -mt-px -ml-px border border-black bg-[#fff2cc]"></div><div class="col-start-6 row-start-14 -mt-px -ml-px border border-black bg-[#fff2cc]"></div>
    <div class="col-start-2 row-start-15 -mt-px -ml-px border border-black bg-white"></div><div class="col-start-3 row-start-15 -mt-px -ml-px border border-black bg-[#fff2cc]"></div><div class="col-start-4 row-start-15 -mt-px -ml-px border border-black bg-white"></div><div class="col-start-5 row-start-15 -mt-px -ml-px border border-black bg-[#fff2cc]"></div><div class="col-start-6 row-start-15 -mt-px -ml-px border border-black bg-[#fff2cc]"></div>
    <div class="col-start-2 row-start-16 -mt-px -ml-px border border-black bg-white"></div><div class="col-start-3 row-start-16 -mt-px -ml-px border border-black bg-[#fff2cc]"></div><div class="col-start-4 row-start-16 -mt-px -ml-px border border-black bg-white"></div><div class="col-start-5 row-start-16 -mt-px -ml-px border border-black bg-[#fff2cc]"></div><div class="col-start-6 row-start-16 -mt-px -ml-px border border-black bg-[#fff2cc]"></div>
    <div class="col-start-2 row-start-17 -mt-px -ml-px border border-black bg-white"></div><div class="col-start-3 row-start-17 -mt-px -ml-px border border-black bg-[#fff2cc]"></div><div class="col-start-4 row-start-17 -mt-px -ml-px border border-black bg-white"></div><div class="col-start-5 row-start-17 -mt-px -ml-px border border-black bg-[#fff2cc]"></div><div class="col-start-6 row-start-17 -mt-px -ml-px border border-black bg-[#fff2cc]"></div>
    <div class="col-start-2 row-start-18 -mt-px -ml-px border border-black bg-white"></div><div class="col-start-3 row-start-18 -mt-px -ml-px border border-black bg-[#fff2cc]"></div><div class="col-start-4 row-start-18 -mt-px -ml-px border border-black bg-white"></div><div class="col-start-5 row-start-18 -mt-px -ml-px border border-black bg-[#fff2cc]"></div><div class="col-start-6 row-start-18 -mt-px -ml-px border border-black bg-[#fff2cc]"></div>

    <div class="col-start-5 row-start-19 -mt-px -ml-px border border-black bg-[#d9e2f3] flex items-center justify-center font-semibold text-[#222] tracking-[3px]">小計</div>
    <div class="col-start-6 row-start-19 -mt-px -ml-px border border-black bg-[#fff2cc] flex items-center justify-end pr-[2px] pb-[1px]">¥1,000</div>
    <div class="col-start-5 row-start-20 -mt-px -ml-px border border-black bg-[#d9e2f3] flex items-center justify-center font-semibold text-[#222] tracking-[3px]">消費税</div>
    <div class="col-start-6 row-start-20 -mt-px -ml-px border border-black bg-[#fff2cc] flex items-center justify-end pr-[2px] pb-[1px]">¥80</div>
    <div class="col-start-5 row-start-21 -mt-px -ml-px border border-double border-t-[3px] border-black bg-[#8eaadb] flex items-center justify-center font-semibold text-[#222] tracking-[3px]">合計</div>
    <div class="col-start-6 row-start-21 -mt-px -ml-px border border-double border-t-[3px] border-black bg-[#fff2cc] flex items-center justify-end pr-[2px] pb-[2px]">¥1,080</div>
  </div>

  <!-- vertical scrollbar -->
  <div class="w-[21px] shrink-0 flex flex-col items-start pl-[3px] pt-[2px] bg-[#e6e6e6]">
    <div class="w-[15px] h-[16px] shrink-0 bg-white border border-[#ababab] flex items-center justify-center"><svg width="8" height="4"><path d="M0 4h8L4 0z" fill="#777"/></svg></div>
    <div class="w-[15px] h-[452px] shrink-0 bg-white border-x border-b border-[#ababab]"></div>
    <div class="w-[15px] flex-1 bg-[#dcdcdc]"></div>
    <div class="w-[15px] h-[15px] shrink-0 bg-white border border-[#ababab] flex items-center justify-center"><svg width="8" height="4"><path d="M0 0h8L4 4z" fill="#777"/></svg></div>
  </div>
</div>

<!-- sheet tabs -->
<div class="h-[28px] shrink-0 bg-[#e6e6e6] border-t border-[#9f9f9f] flex items-start text-[12px]">
  <div class="w-[100px] h-[26px] flex items-center pl-[27px] gap-[24px]"><svg width="5" height="8"><path d="M5 0v8L0 4z" fill="#c6c6c6"/></svg><svg width="5" height="8"><path d="M0 0v8l5-4z" fill="#c6c6c6"/></svg></div>
  <div class="w-[64px] h-[25px] bg-white border-x border-[#9f9f9f] border-b-2 border-b-[#217346] -mt-px flex items-center justify-center text-[#217346] tracking-[0.3px]">請求書</div>
  <div class="w-[90px] h-[24px] flex items-center justify-center tracking-[-1.5px] whitespace-nowrap">商品カタログ</div>
  <div class="w-px h-[20px] mt-[2px] bg-[#9f9f9f]"></div>
  <div class="w-[81px] h-[24px] flex items-center justify-center"><svg width="16" height="16" fill="none" stroke="#777"><circle cx="8" cy="8" r="7" stroke-width="1.300"/><path d="M4 8h8M8 4v8" stroke-width="1.500"/></svg></div>
  <div class="w-[484px] h-[24px] flex items-center justify-end"><svg width="2" height="11" fill="#aaa"><path d="M0 0h2v2H0zM0 4.500h2v2H0zM0 9h2v2H0z"/></svg></div>
  <div class="w-[16px]"></div>
  <div class="flex mt-[6px]">
    <div class="w-[15px] h-[15px] bg-white border border-[#ababab] flex items-center justify-center"><svg width="4" height="7"><path d="M4 0v7L0 3.500z" fill="#555"/></svg></div>
    <div class="w-[450px] h-[15px] bg-white border-y border-r border-[#ababab]"></div>
    <div class="w-[28px] h-[15px] bg-[#dcdcdc]"></div>
    <div class="w-[3px]"></div>
    <div class="w-[15px] h-[15px] bg-white border border-[#ababab] flex items-center justify-center"><svg width="4" height="7"><path d="M0 0v7l4-3.500z" fill="#555"/></svg></div>
  </div>
</div>

<!-- status bar -->
<div class="h-[21px] shrink-0 bg-[#f1f1f1] flex items-center text-[12px] text-[#555]">
  <div class="w-[75px] pl-[7px] tracking-[0px]">準備完了</div>
  <svg width="13" height="12" fill="none" stroke="#666"><circle cx="2.500" cy="2" r="2" fill="#666" stroke="none"/><path d="M5 1.500h7.500V11.500H.5V5h12M.5 8h12M4.500 5v6.500M8.500 5v6.500"/></svg>
  <div class="w-[711px]"></div>
  <div class="w-[77px] whitespace-nowrap tracking-[0.4px]">平均: ¥873</div>
  <div class="w-[101px] whitespace-nowrap tracking-[-0.7px]">データの個数: 22</div>
  <div class="w-[91px] whitespace-nowrap tracking-[0.5px]">合計: ¥5,240</div>
  <div class="w-[37px] h-[21px] bg-[#c6c6c6] flex items-center justify-center"><svg width="13" height="13" fill="none" stroke="#666"><path d="M.5 .5h12v12H.5zM4.500 .5v12M8.500 .5v12M.5 4.500h12M.5 8.500h12"/></svg></div>
  <div class="w-[38px] flex justify-center"><svg width="13" height="13" fill="none" stroke="#666"><path d="M.5 .5h12v12H.5zM3.500 3.500h6v6h-6zM3.500 5.500h6M3.500 7.500h6"/></svg></div>
  <div class="w-[38px] flex justify-center"><svg width="13" height="13" fill="none" stroke="#666"><path d="M.5 .5h12v12H.5zM6.500 .5v6h-6M6.500 6.500h6"/></svg></div>
  <div class="w-[4px]"></div>
  <div class="w-[6px] h-[2px] bg-[#666]"></div>
  <div class="w-[100px] h-[8px] ml-[4px] flex items-center relative"><div class="w-full h-px bg-[#9a9a9a]"></div><div class="absolute left-[40px] -top-[1px] w-[4px] h-[10px] bg-[#555]"></div><div class="absolute left-[50px] top-[1px] w-px h-[6px] bg-[#aaa]"></div></div>
  <div class="relative w-[8px] h-[8px] ml-[4px]"><div class="absolute top-[3px] w-[8px] h-[2px] bg-[#666]"></div><div class="absolute left-[3px] w-[2px] h-[8px] bg-[#666]"></div></div>
  <div class="ml-[17px] text-[12px] tracking-[0.6px]">85%</div>
</div>
<div class="h-[2px] shrink-0 bg-black flex"><div class="w-[48px] bg-[#444]"></div></div>

<!-- color dropdown -->
<div class="absolute left-[226px] top-[131px] w-[173px] h-[244px] bg-white border border-[#c6c6c6] shadow-[2px_2px_4px_rgba(0,0,0,0.25)] flex flex-col text-[12px] text-[#555]">
  <div class="h-[24px] shrink-0 bg-[#e9e9e9] flex items-center pl-[8px] font-semibold tracking-[-1.5px]">テーマの色</div>
  <div class="flex gap-[4px] pl-[2px] mt-[2px]">
    <div class="w-[13px] h-[13px] border border-[#e2e4e4] bg-white"></div><div class="w-[13px] h-[13px] border border-[#e2e4e4] bg-black"></div><div class="w-[13px] h-[13px] border border-[#e2e4e4] bg-[#e7e6e6]"></div><div class="w-[13px] h-[13px] border border-[#e2e4e4] bg-[#44546a]"></div><div class="w-[13px] h-[13px] border border-[#e2e4e4] bg-[#5b9bd5]"></div><div class="w-[13px] h-[13px] border border-[#e2e4e4] bg-[#ed7d31]"></div><div class="w-[13px] h-[13px] border border-[#e2e4e4] bg-[#a5a5a5]"></div><div class="w-[13px] h-[13px] border border-[#e2e4e4] bg-[#ffc000]"></div><div class="w-[13px] h-[13px] border border-[#e2e4e4] bg-[#4472c4]"></div><div class="w-[13px] h-[13px] border border-[#e2e4e4] bg-[#70ad47]"></div>
  </div>
  <div class="flex gap-[4px] pl-[2px] mt-[4px]">
    <div class="w-[13px] h-[65px] flex flex-col border border-[#e2e4e4]"><div class="flex-1 bg-[#f2f2f2]"></div><div class="flex-1 bg-[#d9d9d9]"></div><div class="flex-1 bg-[#bfbfbf]"></div><div class="flex-1 bg-[#a6a6a6]"></div><div class="flex-1 bg-[#808080]"></div></div>
    <div class="w-[13px] h-[65px] flex flex-col border border-[#e2e4e4]"><div class="flex-1 bg-[#808080]"></div><div class="flex-1 bg-[#595959]"></div><div class="flex-1 bg-[#404040]"></div><div class="flex-1 bg-[#262626]"></div><div class="flex-1 bg-[#0d0d0d]"></div></div>
    <div class="w-[13px] h-[65px] flex flex-col border border-[#e2e4e4]"><div class="flex-1 bg-[#d0cece]"></div><div class="flex-1 bg-[#afabab]"></div><div class="flex-1 bg-[#767171]"></div><div class="flex-1 bg-[#3b3838]"></div><div class="flex-1 bg-[#181717]"></div></div>
    <div class="w-[13px] h-[65px] flex flex-col border border-[#e2e4e4]"><div class="flex-1 bg-[#d6dce5]"></div><div class="flex-1 bg-[#adb9ca]"></div><div class="flex-1 bg-[#8497b0]"></div><div class="flex-1 bg-[#333f50]"></div><div class="flex-1 bg-[#222a35]"></div></div>
    <div class="w-[13px] h-[65px] flex flex-col border border-[#e2e4e4]"><div class="flex-1 bg-[#deebf7]"></div><div class="flex-1 bg-[#bdd7ee]"></div><div class="flex-1 bg-[#9dc3e6]"></div><div class="flex-1 bg-[#2e75b6]"></div><div class="flex-1 bg-[#1f4e79]"></div></div>
    <div class="w-[13px] h-[65px] flex flex-col border border-[#e2e4e4]"><div class="flex-1 bg-[#fbe5d6]"></div><div class="flex-1 bg-[#f8cbad]"></div><div class="flex-1 bg-[#f4b183]"></div><div class="flex-1 bg-[#c55a11]"></div><div class="flex-1 bg-[#843c0c]"></div></div>
    <div class="w-[13px] h-[65px] flex flex-col border border-[#e2e4e4]"><div class="flex-1 bg-[#ededed]"></div><div class="flex-1 bg-[#dbdbdb]"></div><div class="flex-1 bg-[#c9c9c9]"></div><div class="flex-1 bg-[#7b7b7b]"></div><div class="flex-1 bg-[#525252]"></div></div>
    <div class="w-[13px] h-[65px] flex flex-col border border-[#e2e4e4]"><div class="flex-1 bg-[#fff2cc]"></div><div class="flex-1 bg-[#ffe699]"></div><div class="flex-1 bg-[#ffd966]"></div><div class="flex-1 bg-[#bf9000]"></div><div class="flex-1 bg-[#7f6000]"></div></div>
    <div class="w-[13px] h-[65px] flex flex-col border border-[#e2e4e4]"><div class="flex-1 bg-[#dae3f3]"></div><div class="flex-1 bg-[#b4c7e7]"></div><div class="flex-1 bg-[#8faadc]"></div><div class="flex-1 bg-[#2f5597]"></div><div class="flex-1 bg-[#203864]"></div></div>
    <div class="w-[13px] h-[65px] flex flex-col border border-[#e2e4e4]"><div class="flex-1 bg-[#e2f0d9]"></div><div class="flex-1 bg-[#c5e0b4]"></div><div class="flex-1 bg-[#a9d18e]"></div><div class="flex-1 bg-[#548235]"></div><div class="flex-1 bg-[#385723]"></div></div>
  </div>
  <div class="h-[23px] shrink-0 mt-[3px] bg-[#e9e9e9] flex items-center pl-[8px] font-semibold tracking-[-0.3px]">標準の色</div>
  <div class="flex gap-[4px] pl-[2px] mt-[2px]">
    <div class="w-[13px] h-[13px] border border-[#e2e4e4] bg-[#c00000]"></div><div class="w-[13px] h-[13px] border border-[#e2e4e4] bg-[#ff0000]"></div><div class="w-[13px] h-[13px] border border-[#e2e4e4] bg-[#ffc000]"></div><div class="w-[13px] h-[13px] border border-[#e2e4e4] bg-[#ffff00]"></div><div class="w-[13px] h-[13px] border border-[#e2e4e4] bg-[#92d050]"></div><div class="w-[13px] h-[13px] border border-[#e2e4e4] bg-[#00b050]"></div><div class="w-[13px] h-[13px] border border-[#e2e4e4] bg-[#00b0f0]"></div><div class="w-[13px] h-[13px] border border-[#e2e4e4] bg-[#0070c0]"></div><div class="w-[13px] h-[13px] border border-[#e2e4e4] bg-[#002060]"></div><div class="w-[13px] h-[13px] border border-[#e2e4e4] bg-[#7030a0]"></div>
  </div>
  <div class="h-[23px] shrink-0 mt-[2px] bg-[#e9e9e9] flex items-center pl-[8px] font-semibold tracking-[-0.8px]">最近使用した色</div>
  <div class="flex gap-[4px] pl-[2px] mt-[2px]">
    <div class="w-[13px] h-[13px] border border-[#e2e4e4] bg-[#f6e2f2]"></div><div class="w-[13px] h-[13px] border border-[#e2e4e4] bg-[#e4b4e1]"></div><div class="w-[13px] h-[13px] border border-[#e2e4e4] bg-[#f5d3ee]"></div>
  </div>
  <div class="h-[26px] shrink-0 flex items-center border-b border-[#e2e2e2] pl-[2px]">
    <div class="w-[20px] h-[20px] border-2 border-[#a6a6a6] bg-[#c6c6c6] shadow-[inset_0_0_0_1px_#e8e8e8]"></div>
    <span class="ml-[10px] tracking-[-1px] whitespace-nowrap">塗りつぶしなし(<u>N</u>)</span>
  </div>
  <div class="flex-1 flex items-center pl-[4px]">
    <svg width="16" height="16" viewBox="0 0 16 16"><path d="M8 8V0a8 8 0 0 0-7.500 5z" fill="#e69a4d"/><path d="M8 8V0a8 8 0 0 1 7.500 5z" fill="#eec583"/><path d="M8 8l7.500-3a8 8 0 0 1-3 9z" fill="#7fae8c"/><path d="M8 8l4.500 6a8 8 0 0 1-9 0z" fill="#3f77b8"/><path d="M8 8l-4.500 6a8 8 0 0 1-3-9z" fill="#d0766d"/></svg>
    <span class="ml-[11px] tracking-[0px] whitespace-nowrap">その他の色(<u>M</u>)...</span>
  </div>
</div>

<!-- callouts -->
<div class="absolute left-[57px] top-[30px] w-[64px] h-[38px] border-[7px] border-[#f00] rounded-[6px] bg-[#f1f1f1] flex items-center justify-center text-[12px] text-[#217346] tracking-[-1.5px]">ホーム</div>
<div class="absolute left-[238px] top-[101px] w-[27px] h-[34px] border-[8px] border-[#f00] rounded-[6px] bg-[#c6c6c6] flex items-center justify-center"><svg width="6" height="4"><path d="M0 0h6L3 4z" fill="#444"/></svg></div>
<div class="absolute left-[342px] top-[168px] w-[26px] h-[27px] border-[7px] border-[#f00] rounded-[5px] bg-[#fff2cc]"></div>

<div class="absolute left-[136px] top-[16px] w-[41px] h-[41px] rounded-full bg-white shadow-[0_0_4px_rgba(0,0,0,0.45)] flex items-center justify-center"><div class="w-[35px] h-[35px] rounded-full border-2 border-[#f00] flex items-center justify-center text-[#f00] font-black text-[25px] leading-none [font-family:'Liberation_Sans']">9</div></div>
<div class="absolute left-[269px] top-[70px] w-[41px] h-[41px] rounded-full bg-white shadow-[0_0_4px_rgba(0,0,0,0.45)] flex items-center justify-center"><div class="w-[35px] h-[35px] rounded-full border-2 border-[#f00] flex items-center justify-center text-[#f00] font-black text-[24px] tracking-[-1px] leading-none [font-family:'Liberation_Sans']">10</div></div>
<div class="absolute left-[379px] top-[160px] w-[41px] h-[41px] rounded-full bg-white shadow-[0_0_4px_rgba(0,0,0,0.45)] flex items-center justify-center"><div class="w-[35px] h-[35px] rounded-full border-2 border-[#f00] flex items-center justify-center text-[#f00] font-black text-[24px] tracking-[-1px] leading-none [font-family:'Liberation_Sans']">11</div></div>

</div>
</body></html>
